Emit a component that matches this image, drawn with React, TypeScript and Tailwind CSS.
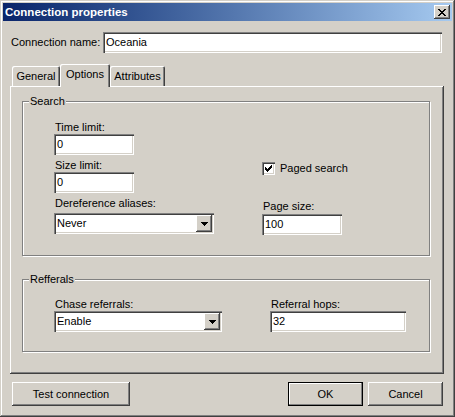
import React from "react";

const sunken =
  "shadow-[inset_1px_1px_0_#808080,inset_2px_2px_0_#404040,inset_-1px_-1px_0_#fff,inset_-2px_-2px_0_#d4d0c8]";
const raised =
  "shadow-[inset_-1px_-1px_0_#404040,inset_1px_1px_0_#fff,inset_-2px_-2px_0_#808080,inset_2px_2px_0_#d4d0c8]";

function Label({ children }: { children: React.ReactNode }) {
  return <div className="h-[13px] leading-[13px] pl-[1px]">{children}</div>;
}

function Edit({ value, className }: { value: string; className: string }) {
  return (
    <div className={`h-[21px] bg-white pl-[3px] flex items-center leading-[13px] ${sunken} ${className}`}>
      {value}
    </div>
  );
}

function Combo({ value, className }: { value: string; className: string }) {
  return (
    <div className={`h-[21px] bg-white p-[2px] flex items-center ${sunken} ${className}`}>
      <span className="flex-1 pl-[1px] leading-[13px]">{value}</span>
      <div className={`w-[16px] h-[17px] bg-[#d4d0c8] flex items-center justify-center ${raised}`}>
        <svg width="7" height="4" viewBox="0 0 7 4" shapeRendering="crispEdges">
          <path d="M0 0h7v1h-1v1h-1v1h-1v1h-1v-1h-1v-1h-1v-1h-1z" fill="#000" />
        </svg>
      </div>
    </div>
  );
}

function Group({ title, className, children }: { title: string; className: string; children: React.ReactNode }) {
  return (
    <div className={`relative border border-[#808080] shadow-[inset_1px_1px_0_#fff,1px_1px_0_#fff] ${className}`}>
      {/* caption sits over the etched line */}
      <span className="absolute left-[6px] top-[-7px] bg-[#d4d0c8] px-[1px] leading-[13px]">{title}</span>
      {children}
    </div>
  );
}

function Button({ label, className, isDefault }: { label: string; className: string; isDefault?: boolean }) {
  return (
    <div
      className={`h-[24px] flex items-center justify-center ${
        isDefault
          ? "border border-black shadow-[inset_-1px_-1px_0_#808080,inset_1px_1px_0_#fff]"
          : raised
      } ${className}`}
    >
      {label}
    </div>
  );
}

export default function App() {
  return (
    <div className="w-[455px] h-[417px] bg-[#d4d0c8] p-[3px] text-[11px] text-black font-['Liberation_Sans',Arial,sans-serif] shadow-[inset_-1px_-1px_0_#404040,inset_1px_1px_0_#d4d0c8,inset_-2px_-2px_0_#808080,inset_2px_2px_0_#fff]">
      {/* Title bar */}
      <div className="h-[18px] bg-gradient-to-r from-[#0a246a] to-[#a6caf0] flex items-center justify-between pl-[2px] pr-[2px]">
        <span className="text-white font-bold text-[11.5px] leading-[13px]">Connection properties</span>
        <div className={`w-[16px] h-[14px] bg-[#d4d0c8] flex items-center justify-center ${raised}`}>
          <svg width="8" height="7" viewBox="0 0 8 7" shapeRendering="crispEdges">
            <path
              d="M0 0h2v1h1v1h2v-1h1v-1h2v1h-1v1h-1v1h-1v1h1v1h1v1h1v1h-2v-1h-1v-1h-2v1h-1v1h-2v-1h1v-1h1v-1h1v-1h-1v-1h-1v-1h-1z"
              fill="#000"
            />
          </svg>
        </div>
      </div>

      {/* Connection name */}
      <div className="flex items-center mt-[11px] pl-[8px]">
        <span className="w-[92px] leading-[13px]">Connection name:</span>
        <Edit value="Oceania" className="w-[339px]" />
      </div>

      {/* Tabs */}
      <div className="flex items-end h-[22px] mt-[11px] ml-[9px]">
        <div className="w-[48px] h-[20px] flex items-center justify-center rounded-t-[2px] shadow-[inset_1px_1px_0_#fff,inset_-1px_0_0_#404040,inset_-2px_0_0_#808080]">
          General
        </div>
        <div className="relative z-10 w-[50px] h-[23px] mb-[-1px] pb-[2px] bg-[#d4d0c8] flex items-center justify-center rounded-t-[2px] shadow-[inset_1px_1px_0_#fff,inset_-1px_0_0_#404040,inset_-2px_0_0_#808080]">
          Options
        </div>
        <div className="w-[55px] h-[20px] flex items-center justify-center rounded-t-[2px] shadow-[inset_1px_1px_0_#fff,inset_-1px_0_0_#404040,inset_-2px_0_0_#808080]">
          Attributes
        </div>
      </div>

      {/* Tab panel */}
      <div className={`ml-[7px] w-[434px] h-[288px] pl-[12px] pt-[15px] ${raised}`}>
        <Group title="Search" className="w-[408px] h-[155px] pl-[31px] pt-[19px] flex">
          <div className="w-[160px]">
            <Label>Time limit:</Label>
            <Edit value="0" className="w-[80px]" />
            <div className="mt-[4px]">
              <Label>Size limit:</Label>
            </div>
            <Edit value="0" className="w-[80px]" />
            <div className="mt-[4px]">
              <Label>Dereference aliases:</Label>
            </div>
            <Combo value="Never" className="w-[160px] mt-[3px]" />
          </div>
          <div className="ml-[48px]">
            <div className="flex items-center mt-[41px] h-[13px]">
              <div className={`w-[13px] h-[13px] bg-white flex items-center justify-center ${sunken}`}>
                <svg width="7" height="7" viewBox="0 0 7 7" shapeRendering="crispEdges">
                  <path
                    d="M6 0h1v3h-1v1h-1v1h-1v1h-1v1h-1v-1h-1v-1h-1v-3h1v1h1v1h1v-1h1v-1h1z"
                    fill="#000"
                  />
                </svg>
              </div>
              <span className="ml-[5px] leading-[13px]">Paged search</span>
            </div>
            <div className="mt-[25px]">
              <Label>Page size:</Label>
            </div>
            <Edit value="100" className="w-[80px] mt-[1px]" />
          </div>
        </Group>

        <Group title="Refferals" className="mt-[23px] w-[408px] h-[73px] pl-[31px] pt-[18px] flex">
          <div className="w-[168px]">
            <Label>Chase referrals:</Label>
            <Combo value="Enable" className="w-[168px]" />
          </div>
          <div className="ml-[48px]">
            <Label>Referral hops:</Label>
            <Edit value="32" className="w-[136px]" />
          </div>
        </Group>
      </div>

      {/* Buttons */}
      <div className="flex mt-[8px] ml-[9px]">
        <Button label="Test connection" className="w-[118px]" />
        <Button label="OK" className="w-[75px] ml-[158px]" isDefault />
        <Button label="Cancel" className="w-[75px] ml-[5px]" />
      </div>
    </div>
  );
}
